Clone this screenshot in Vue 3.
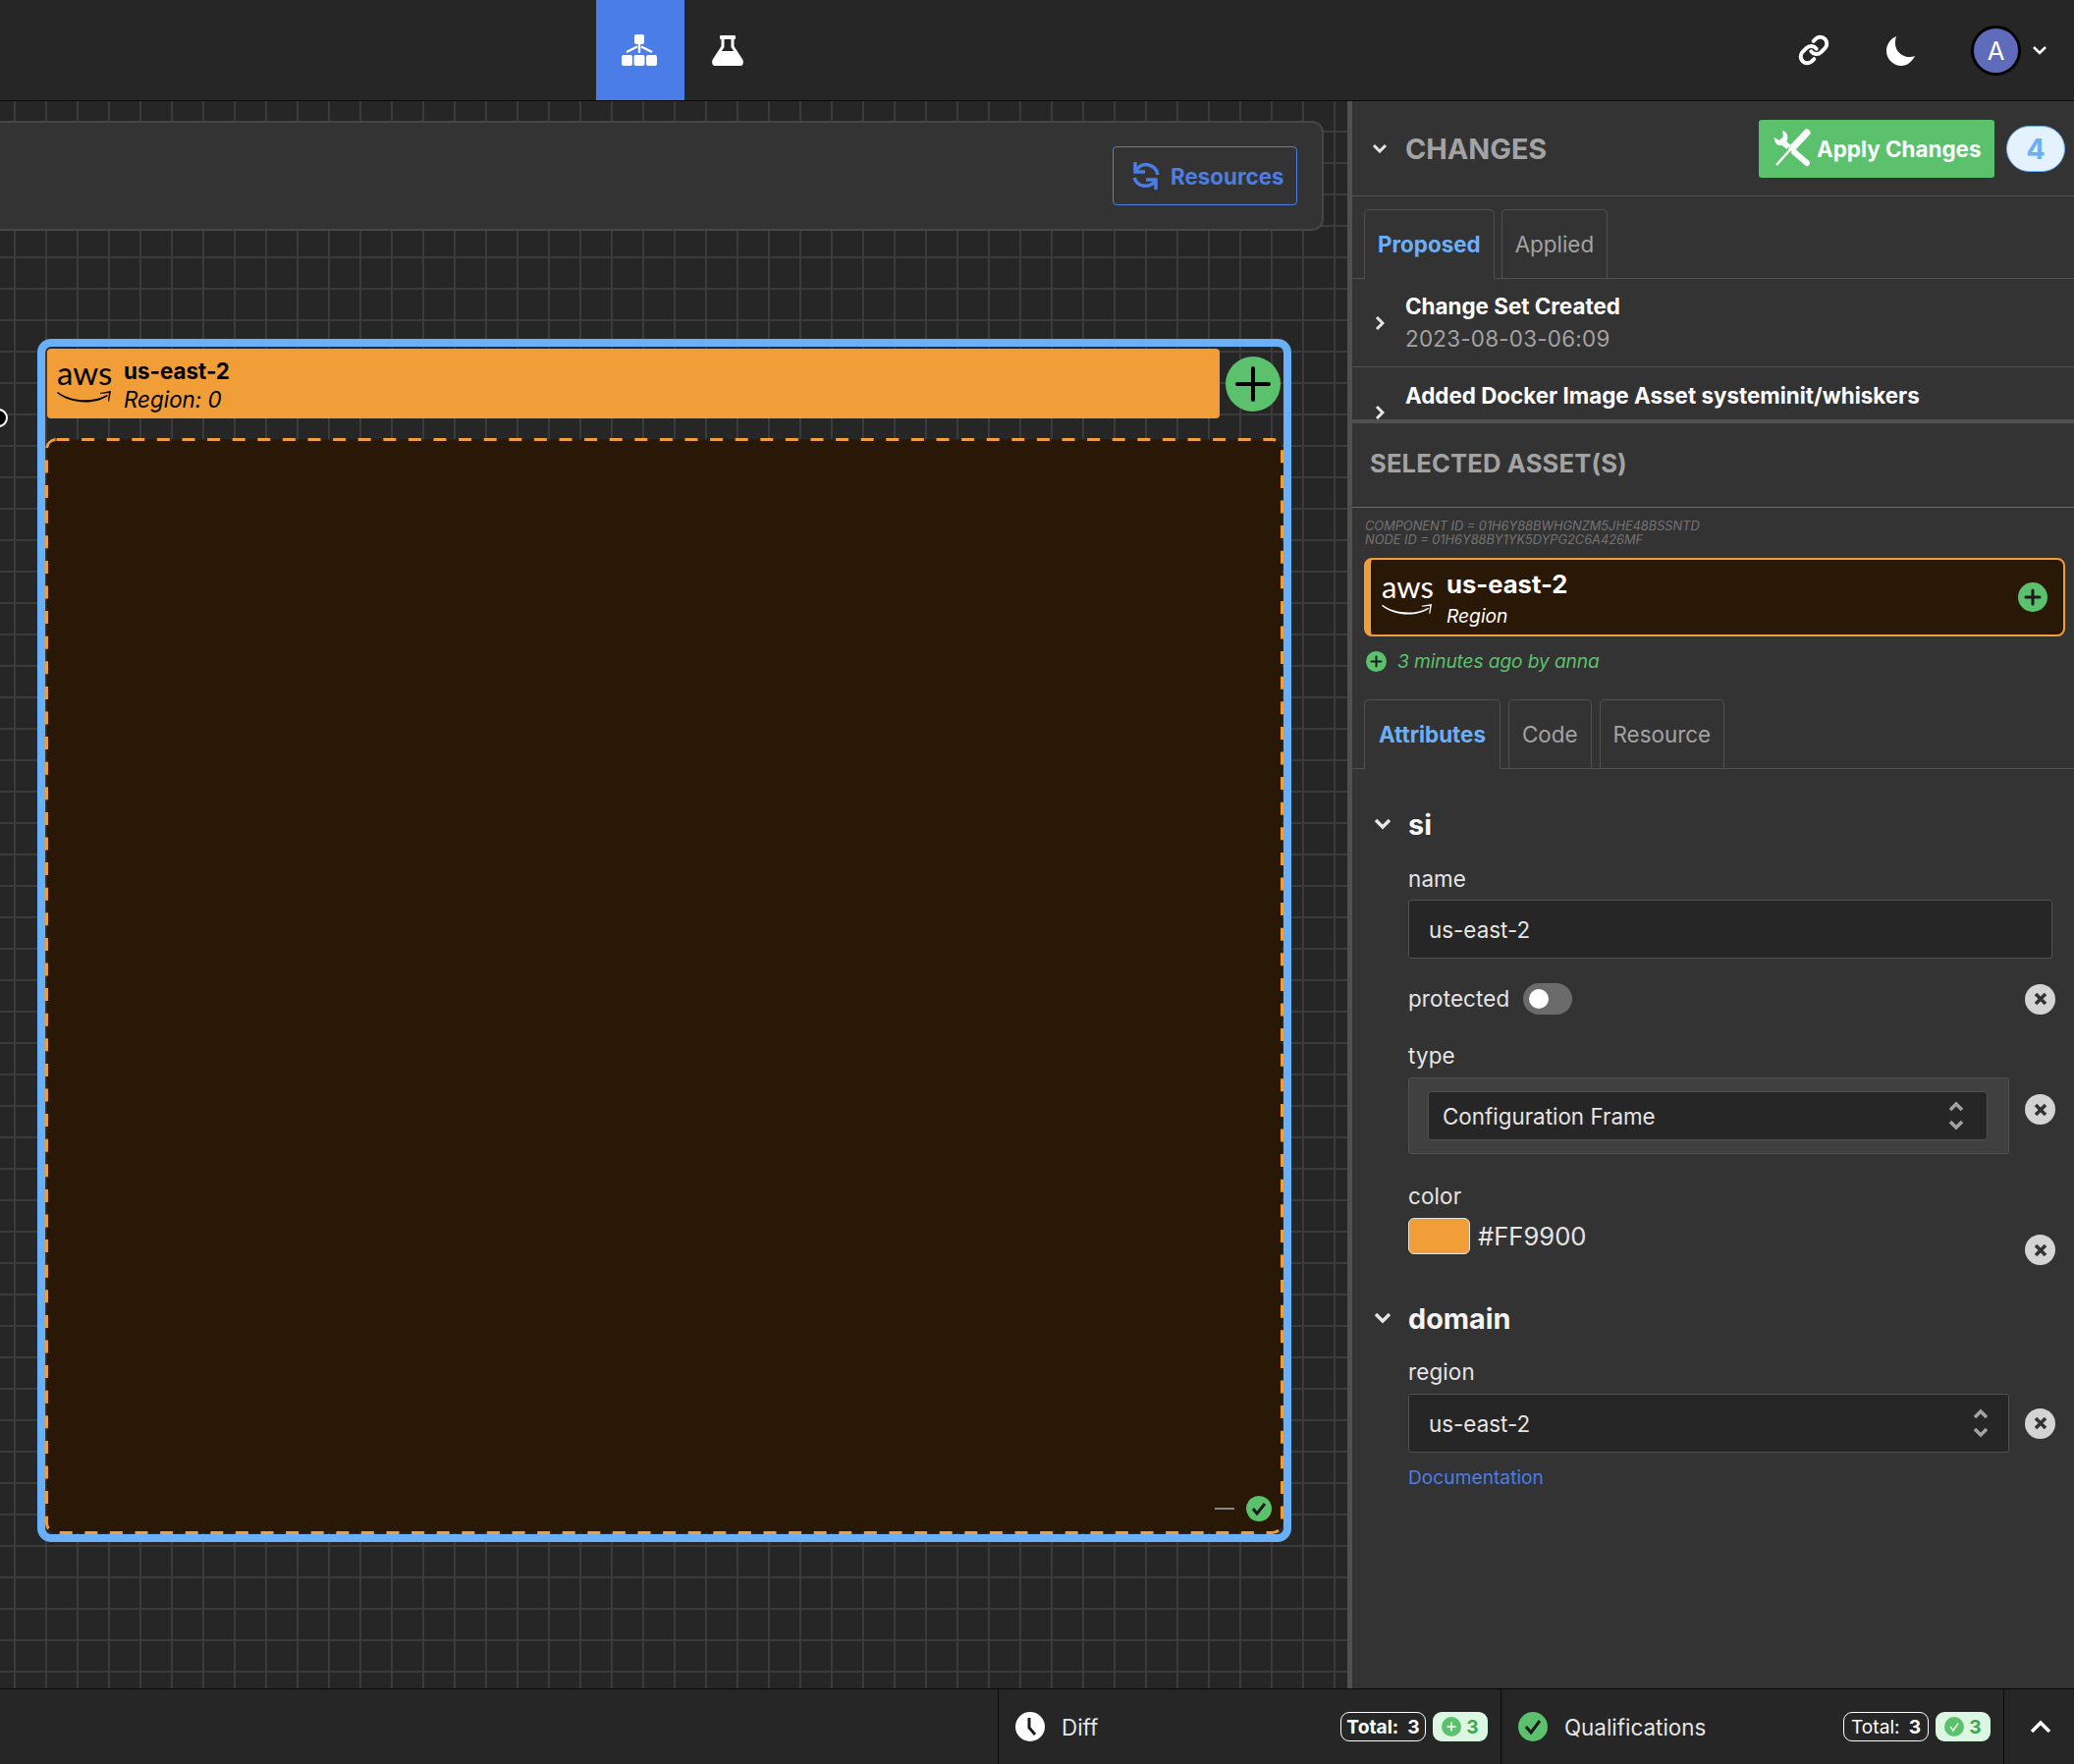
<template>
  <div class="app">
    <!-- top nav -->
    <header class="topbar">
      <nav class="nav-tabs">
        <div class="nav-tab active">
          <svg width="36" height="32" viewBox="0 0 36 32">
            <rect x="13" y="0" width="10" height="10" rx="2" fill="#fff" />
            <rect x="0" y="21" width="11" height="11" rx="2" fill="#fff" />
            <rect x="12.5" y="21" width="11" height="11" rx="2" fill="#fff" />
            <rect x="25" y="21" width="11" height="11" rx="2" fill="#fff" />
            <path d="M18 10v9M16 12.5 5 18M20 12.5 31 18" stroke="#fff" stroke-width="2.4" fill="none" />
          </svg>
        </div>
        <div class="nav-tab">
          <svg width="32" height="31" viewBox="0 0 32 31">
            <rect x="8" y="0" width="16" height="4" rx="1" fill="#fff" />
            <path d="M11 3v8.5L2 25.5Q.5 30 5 30h22q4.500 0 3-4.500L21 11.500V3" fill="none" stroke="#fff" stroke-width="3" />
            <path d="M9 16h14l8 12-3 2H4l-3-2z" fill="#fff" />
          </svg>
        </div>
      </nav>
      <div class="top-actions">
        <svg class="link-icon" width="32" height="32" viewBox="0 0 24 24" fill="none" stroke="#fff" stroke-width="3" stroke-linecap="round">
          <path d="M10 13a5 5 0 0 0 7.540.54l3-3a5 5 0 0 0-7.070-7.070l-1.720 1.710" />
          <path d="M14 11a5 5 0 0 0-7.540-.54l-3 3a5 5 0 0 0 7.070 7.070l1.710-1.710" />
        </svg>
        <svg class="moon-icon" width="30" height="30" viewBox="0 0 30 30">
          <path d="M10 0C3 3 0 9 0 15c0 8 7 15 15 15 6 0 11-4 14-10C19 24 5 16 10 0z" fill="#fff" />
        </svg>
        <div class="avatar">A</div>
        <svg class="avatar-caret" width="16" height="10" viewBox="0 0 16 10" fill="none" stroke="#fff" stroke-width="2.500">
          <path d="M2 2l6 6 6-6" />
        </svg>
      </div>
    </header>

    <main class="workspace">
      <!-- diagram canvas -->
      <section class="canvas">
        <div class="toolbar">
          <button class="resources-btn" type="button">
            <svg width="30" height="34" viewBox="10 8 30 34" fill="none" stroke="#4a7de8" stroke-width="3.500">
              <path d="M15 11v10h10M15 21a12 12 0 0 1 23 3" />
              <path d="M36 39V29H26M36 29a12 12 0 0 1-22-2" />
            </svg>
            Resources
          </button>
        </div>

        <div class="port"></div>

        <div class="frame">
          <div class="frame-top">
            <div class="frame-head">
              <div class="aws-logo">
                <span>aws</span>
                <svg width="56" height="14" viewBox="0 0 56 14">
                  <path d="M1 2c13 10 36 11 50 3l1 1C38 16 13 14 0 3zM44 3l11-2-2 11-1-1 1-8-9 1z" fill="currentColor" />
                </svg>
              </div>
              <div class="frame-title">
                <strong>us-east-2</strong>
                <em>Region: 0</em>
              </div>
            </div>
            <div class="frame-add">
              <svg width="36" height="36" viewBox="0 0 36 36">
                <path d="M18 2v32M2 18h32" stroke="#000" stroke-width="4" stroke-linecap="round" />
              </svg>
            </div>
          </div>

          <div class="frame-body">
            <svg class="frame-dash" width="1261" height="1116" viewBox="0 0 1261 1116">
              <rect x="1.500" y="1.500" width="1258" height="1113" rx="10" fill="#281805" stroke="#f19e38" stroke-width="3" stroke-dasharray="13 12.600" />
            </svg>
            <div class="frame-status">
              <span class="status-dash"></span>
              <span class="status-check">
                <svg width="16" height="14" viewBox="0 0 16 14" fill="none" stroke="#1b1b1b" stroke-width="3">
                  <path d="M2 7l4 5 8-10" />
                </svg>
              </span>
            </div>
          </div>
        </div>
      </section>

      <!-- right panel -->
      <aside class="panel">
        <div class="changes-head">
          <svg class="chev-down" width="16" height="10" viewBox="0 0 16 10" fill="none" stroke="#e5e5e5" stroke-width="3">
            <path d="M2 2l6 6 6-6" />
          </svg>
          <h2>CHANGES</h2>
          <button class="apply-btn" type="button">
            <svg width="40" height="40" viewBox="8 6 40 40">
              <path d="M18 8c5 1 7 7 4 12l-2 2c-5 3-10 0-10.500-7l5.500 3 4-4z" fill="#fff" />
              <path d="M20 21l23 20" stroke="#fff" stroke-width="6" stroke-linecap="round" />
              <path d="M12 43l16-18" stroke="#5cc16c" stroke-width="6" />
              <path d="M12 43l16-18" stroke="#fff" stroke-width="2.500" />
              <path d="M28 26 43 10" stroke="#fff" stroke-width="7" stroke-linecap="round" />
            </svg>
            Apply Changes
          </button>
          <span class="count-badge">4</span>
        </div>

        <div class="tab-strip">
          <div v-for="tab in changeTabs" :key="tab" class="tab" :class="{ active: tab === 'Proposed' }">{{ tab }}</div>
        </div>

        <div class="change-list">
          <div v-for="item in changes" :key="item.title" class="change-row">
            <svg class="chev-right" width="10" height="16" viewBox="0 0 10 16" fill="none" stroke="#e5e5e5" stroke-width="3">
              <path d="M2 2l6 6-6 6" />
            </svg>
            <div>
              <div class="change-title">{{ item.title }}</div>
              <div class="change-date">{{ item.date }}</div>
            </div>
          </div>
        </div>

        <div class="selected-head">SELECTED ASSET(S)</div>

        <div class="ids">
          COMPONENT ID = 01H6Y88BWHGNZM5JHE48BSSNTD<br />
          NODE ID = 01H6Y88BY1YK5DYPG2C6A426MF
        </div>

        <div class="asset-card">
          <div class="aws-logo small">
            <span>aws</span>
            <svg width="52" height="13" viewBox="0 0 56 14">
              <path d="M1 2c13 10 36 11 50 3l1 1C38 16 13 14 0 3zM44 3l11-2-2 11-1-1 1-8-9 1z" fill="currentColor" />
            </svg>
          </div>
          <div class="asset-title">
            <strong>us-east-2</strong>
            <em>Region</em>
          </div>
          <span class="asset-add">
            <svg width="18" height="18" viewBox="0 0 18 18">
              <path d="M9 2v14M2 9h14" stroke="#1b1b1b" stroke-width="3" stroke-linecap="round" />
            </svg>
          </span>
        </div>

        <div class="asset-time">
          <span class="time-dot">
            <svg width="13" height="13" viewBox="0 0 13 13">
              <path d="M6.500 1.500v10M1.500 6.500h10" stroke="#1b1b1b" stroke-width="2" stroke-linecap="round" />
            </svg>
          </span>
          3 minutes ago by anna
        </div>

        <div class="tab-strip attr-tabs">
          <div v-for="tab in assetTabs" :key="tab" class="tab" :class="{ active: tab === 'Attributes' }">{{ tab }}</div>
        </div>

        <div class="attrs">
          <div class="group-head first">
            <svg width="18" height="12" viewBox="0 0 18 12" fill="none" stroke="#e5e5e5" stroke-width="3.500">
              <path d="M2 2l7 7 7-7" />
            </svg>
            <span>si</span>
          </div>

          <div class="field-label name-label">name</div>
          <div class="text-input">us-east-2</div>

          <div class="attr-row protected-row">
            <div class="protected">
              <span class="field-label">protected</span>
              <span class="toggle"><i></i></span>
            </div>
            <span class="clear-btn">
              <svg width="16" height="16" viewBox="0 0 16 16"><path d="M3 3l10 10M13 3L3 13" stroke="#333" stroke-width="3.500" /></svg>
            </span>
          </div>

          <div class="field-label type-label">type</div>
          <div class="attr-row type-row">
            <div class="select-wrap">
              <div class="select-box">
                Configuration Frame
                <svg width="16" height="30" viewBox="0 0 16 30" fill="none" stroke="#a3a3a3" stroke-width="3.500">
                  <path d="M2 9l6-6 6 6M2 21l6 6 6-6" />
                </svg>
              </div>
            </div>
            <span class="clear-btn">
              <svg width="16" height="16" viewBox="0 0 16 16"><path d="M3 3l10 10M13 3L3 13" stroke="#333" stroke-width="3.500" /></svg>
            </span>
          </div>

          <div class="field-label color-label">color</div>
          <div class="attr-row color-row">
            <div class="color-value">
              <span class="swatch"></span>
              #FF9900
            </div>
            <span class="clear-btn">
              <svg width="16" height="16" viewBox="0 0 16 16"><path d="M3 3l10 10M13 3L3 13" stroke="#333" stroke-width="3.500" /></svg>
            </span>
          </div>

          <div class="group-head second">
            <svg width="18" height="12" viewBox="0 0 18 12" fill="none" stroke="#e5e5e5" stroke-width="3.500">
              <path d="M2 2l7 7 7-7" />
            </svg>
            <span>domain</span>
          </div>

          <div class="field-label region-label">region</div>
          <div class="attr-row region-row">
            <div class="select-box plain">
              us-east-2
              <svg width="16" height="30" viewBox="0 0 16 30" fill="none" stroke="#a3a3a3" stroke-width="3.500">
                <path d="M2 9l6-6 6 6M2 21l6 6 6-6" />
              </svg>
            </div>
            <span class="clear-btn">
              <svg width="16" height="16" viewBox="0 0 16 16"><path d="M3 3l10 10M13 3L3 13" stroke="#333" stroke-width="3.500" /></svg>
            </span>
          </div>
          <a class="doc-link">Documentation</a>
        </div>
      </aside>
    </main>

    <!-- status bar -->
    <footer class="statusbar">
      <div class="status-cell">
        <span class="cell-icon clock">
          <svg width="30" height="30" viewBox="0 0 30 30">
            <circle cx="15" cy="15" r="15" fill="#fff" />
            <path d="M14 6v10l6 7" fill="none" stroke="#1b1b1b" stroke-width="3" />
          </svg>
        </span>
        <span class="cell-label">Diff</span>
        <span class="pill total bold">Total:<b>3</b></span>
        <span class="pill ok">
          <span class="mini-dot">
            <svg width="12" height="12" viewBox="0 0 12 12"><path d="M6 1.500v9M1.500 6h9" stroke="#dcf7e1" stroke-width="2" /></svg>
          </span>
          3
        </span>
      </div>
      <div class="status-cell">
        <span class="cell-icon check">
          <svg width="18" height="16" viewBox="0 0 18 16" fill="none" stroke="#1b1b1b" stroke-width="3">
            <path d="M2 8l5 6 9-12" />
          </svg>
        </span>
        <span class="cell-label">Qualifications</span>
        <span class="pill total">Total:<b>3</b></span>
        <span class="pill ok">
          <span class="mini-dot">
            <svg width="12" height="12" viewBox="0 0 12 12" fill="none"><path d="M2 6l3 4 5-7.500" stroke="#dcf7e1" stroke-width="1.600" /></svg>
          </span>
          3
        </span>
      </div>
      <div class="caret-cell">
        <svg width="22" height="14" viewBox="0 0 22 14" fill="none" stroke="#fff" stroke-width="3.500">
          <path d="M2 12l9-9 9 9" />
        </svg>
      </div>
    </footer>
  </div>
</template>

<script setup>
const changeTabs = ["Proposed", "Applied"];
const assetTabs = ["Attributes", "Code", "Resource"];

const changes = [
  { title: "Change Set Created", date: "2023-08-03-06:09" },
  { title: "Added Docker Image Asset systeminit/whiskers", date: "2023-08-03-06:10" },
];
</script>

<style>
html,
body {
  margin: 0;
  background: #262626;
}
</style>

<style scoped>
.app {
  display: flex;
  flex-direction: column;
  width: 2112px;
  height: 1796px;
  overflow: hidden;
  font-family: Inter, "Liberation Sans", sans-serif;
  font-size: 22.4px;
  color: #e5e5e5;
  background: #262626;
}

/* top nav */
.topbar {
  display: flex;
  justify-content: space-between;
  flex: none;
  height: 102px;
  padding-left: 607px;
  box-sizing: content-box;
  background: #262626;
  border-bottom: 1px solid #0a0a0a;
}

.nav-tabs {
  display: flex;
}

.nav-tab {
  display: flex;
  align-items: center;
  justify-content: center;
  box-sizing: border-box;
  width: 90px;
  height: 102px;
  padding-right: 2px;
}

.nav-tab.active {
  background: #4a7de8;
}

.top-actions {
  display: flex;
  align-items: center;
  padding-right: 27px;
}

.moon-icon {
  margin-left: 58px;
  margin-top: 2px;
}

.avatar {
  display: flex;
  align-items: center;
  justify-content: center;
  width: 45px;
  height: 45px;
  margin-left: 56px;
  border: 3px solid #000;
  border-radius: 50%;
  background: #5f6bbb;
  color: #fff;
  font-size: 25.6px;
}

.avatar-caret {
  margin-left: 11px;
}

/* canvas */
.workspace {
  display: flex;
  flex: 1;
  min-height: 0;
}

.canvas {
  position: relative;
  flex: none;
  width: 1372px;
  background-color: #262626;
  background-image: linear-gradient(to right, #3b3b3b 2px, transparent 2px),
    linear-gradient(to bottom, #3b3b3b 2px, transparent 2px);
  background-size: 32px 32px;
  background-position: 14px 30px;
}

.toolbar {
  display: flex;
  align-items: center;
  justify-content: flex-end;
  box-sizing: border-box;
  width: 1348px;
  height: 112px;
  margin-top: 20px;
  padding-right: 25px;
  background: #333;
  border: 2px solid #464646;
  border-left: none;
  border-radius: 0 12px 12px 0;
}

.resources-btn {
  display: flex;
  align-items: center;
  gap: 11px;
  box-sizing: border-box;
  width: 188px;
  height: 60px;
  padding: 0 0 0 17px;
  background: none;
  border: 1px solid #4a7de8;
  border-radius: 4px;
  color: #4a7de8;
  font: 700 22.4px Inter, sans-serif;
}

.port {
  position: absolute;
  left: -11px;
  top: 313px;
  width: 15px;
  height: 15px;
  border: 2px solid #fff;
  border-radius: 50%;
  background: #000;
}

.frame {
  position: absolute;
  left: 38px;
  top: 242px;
  display: flex;
  flex-direction: column;
  box-sizing: border-box;
  width: 1277px;
  height: 1225px;
  border: 8px solid #69b0f8;
  border-radius: 14px;
}

.frame-top {
  display: flex;
  align-items: center;
  margin: 2px 0 20px 2px;
}

.frame-head {
  display: flex;
  align-items: center;
  box-sizing: border-box;
  width: 1194px;
  height: 71px;
  padding-left: 10px;
  background: #f19e38;
  border-radius: 4px;
  color: #000;
}

.aws-logo {
  display: flex;
  flex-direction: column;
  width: 56px;
  font-family: Lato, sans-serif;
  font-size: 33px;
  line-height: 24px;
  text-align: center;
}

.aws-logo span {
  margin-top: -3px;
}

.aws-logo svg {
  margin-top: 6px;
}

.frame-title {
  display: flex;
  flex-direction: column;
  margin-left: 12px;
  padding-top: 2px;
  line-height: 29px;
}

.frame-title strong {
  font-weight: 700;
}

.frame-add {
  display: flex;
  align-items: center;
  justify-content: center;
  width: 56px;
  height: 56px;
  margin-left: 6px;
  border-radius: 50%;
  background: #5cc16c;
}

.frame-body {
  position: relative;
  display: flex;
  align-items: flex-end;
  justify-content: flex-end;
  flex: 1;
}

.frame-dash {
  position: absolute;
  left: 0;
  top: 0;
}

.frame-status {
  position: relative;
  display: flex;
  align-items: center;
  gap: 12px;
  padding: 0 12px 13px 0;
}

.status-dash {
  width: 20px;
  height: 2px;
  background: #888;
}

.status-check {
  display: flex;
  align-items: center;
  justify-content: center;
  width: 26px;
  height: 26px;
  border-radius: 50%;
  background: #5cc16c;
}

/* right panel */
.panel {
  flex: none;
  box-sizing: border-box;
  width: 740px;
  background: #333;
  border-left: 5px solid #505050;
}

.changes-head {
  display: flex;
  align-items: center;
  box-sizing: border-box;
  height: 97px;
  padding: 0 9px 0 20px;
  border-bottom: 1px solid #505050;
}

.changes-head h2 {
  flex: 1;
  margin: 0 0 0 18px;
  font-size: 28.8px;
  font-weight: 700;
  color: #a3a3a3;
}

.apply-btn {
  display: flex;
  align-items: center;
  gap: 5px;
  box-sizing: border-box;
  width: 240px;
  height: 59px;
  padding: 0 0 0 14px;
  border: none;
  border-radius: 3px;
  background: #5cc16c;
  color: #fff;
  font: 700 22.4px Inter, sans-serif;
}

.count-badge {
  display: flex;
  align-items: center;
  justify-content: center;
  box-sizing: border-box;
  width: 60px;
  height: 47px;
  margin-left: 12px;
  border: 1px solid #69b0f8;
  border-radius: 24px;
  background: #e3f2fd;
  color: #69b0f8;
  font-size: 28.8px;
  font-weight: 700;
}

.tab-strip {
  display: flex;
  gap: 7px;
  box-sizing: border-box;
  height: 84px;
  padding: 13px 0 0 12px;
  border-bottom: 1px solid #505050;
}

.tab {
  display: flex;
  align-items: center;
  height: 70px;
  box-sizing: border-box;
  padding: 0 13px;
  border: 1px solid #505050;
  border-bottom: none;
  border-radius: 5px 5px 0 0;
  color: #a3a3a3;
}

.tab.active {
  height: 71px;
  padding-bottom: 1px;
  background: #333;
  color: #69b0f8;
  font-weight: 700;
}

.change-list {
  height: 143px;
  overflow: hidden;
  border-bottom: 4px solid #505050;
}

.change-row {
  display: flex;
  align-items: center;
  box-sizing: border-box;
  height: 90px;
  padding-left: 23px;
  border-bottom: 1px solid #505050;
  line-height: 32px;
}

.change-row + .change-row {
  padding-top: 2px;
}

.change-title {
  margin-left: 21px;
  color: #fff;
  font-weight: 700;
}

.change-date {
  margin: 1px 0 0 21px;
  color: #a3a3a3;
  letter-spacing: 0.25px;
}

.selected-head {
  box-sizing: border-box;
  height: 86px;
  padding: 26px 0 0 18px;
  border-bottom: 1px solid #6b6b6b;
  color: #a3a3a3;
  font-size: 25.6px;
  font-weight: 700;
  letter-spacing: 0.15px;
  line-height: 30px;
}

.ids {
  height: 27px;
  padding: 12px 0 12px 13px;
  color: #737373;
  font-size: 12.8px;
  font-style: italic;
  line-height: 13.500px;
}

.asset-card {
  display: flex;
  align-items: center;
  box-sizing: border-box;
  width: 714px;
  height: 80px;
  margin-left: 12px;
  padding: 0 16px 0 11px;
  background: #281805;
  border: 2px solid #f19e38;
  border-left-width: 7px;
  border-radius: 8px;
  color: #fff;
}

.aws-logo.small {
  width: 52px;
  font-size: 31px;
  line-height: 22px;
}

.asset-title {
  display: flex;
  flex: 1;
  flex-direction: column;
  margin-left: 14px;
  padding-top: 5px;
  line-height: 32px;
}

.asset-title strong {
  font-size: 25.6px;
  font-weight: 700;
}

.asset-title em {
  font-size: 19.2px;
}

.asset-add {
  display: flex;
  align-items: center;
  justify-content: center;
  width: 30px;
  height: 30px;
  border-radius: 50%;
  background: #5cc16c;
}

.asset-time {
  display: flex;
  align-items: center;
  gap: 11px;
  height: 26px;
  margin: 12px 0 0 14px;
  color: #5cc16c;
  font-size: 19.2px;
  font-style: italic;
  letter-spacing: -0.13px;
}

.time-dot {
  display: flex;
  align-items: center;
  justify-content: center;
  width: 21px;
  height: 21px;
  border-radius: 50%;
  background: #5cc16c;
}

.attr-tabs {
  gap: 8px;
  margin-top: 13px;
}

.attr-tabs .tab.active {
  padding: 0 14px 1px;
}

.attrs {
  padding-left: 57px;
}

.group-head {
  position: relative;
  display: flex;
  align-items: center;
  height: 40px;
  font-size: 28.8px;
  font-weight: 700;
  color: #f5f5f5;
}

.group-head svg {
  position: absolute;
  left: -35px;
  top: 14px;
}

.group-head.first {
  margin-top: 36px;
}

.group-head.second {
  margin-top: 45px;
}

.field-label {
  display: block;
  height: 30px;
  line-height: 30px;
  color: #e5e5e5;
  letter-spacing: 0.15px;
}

.name-label {
  margin-top: 21px;
}

.text-input {
  display: flex;
  align-items: center;
  box-sizing: border-box;
  width: 656px;
  height: 60px;
  margin-top: 6px;
  padding-left: 20px;
  background: #262626;
  border: 1px solid #505050;
  border-radius: 3px;
}

.attr-row {
  display: flex;
  justify-content: space-between;
  width: 659px;
}

.protected-row {
  align-items: center;
  height: 32px;
  margin-top: 25px;
}

.protected {
  display: flex;
  align-items: center;
  gap: 14px;
}

.toggle {
  display: flex;
  align-items: center;
  box-sizing: border-box;
  width: 50px;
  height: 32px;
  padding-left: 6px;
  border-radius: 16px;
  background: #6b6b6b;
}

.toggle i {
  width: 20px;
  height: 20px;
  border-radius: 50%;
  background: #fff;
}

.clear-btn {
  display: flex;
  align-items: center;
  justify-content: center;
  flex: none;
  width: 31px;
  height: 31px;
  border-radius: 50%;
  background: #d4d4d4;
}

.type-label {
  margin-top: 27px;
}

.type-row {
  align-items: flex-start;
  margin-top: 7px;
}

.type-row .clear-btn {
  margin-top: 17px;
}

.select-wrap {
  box-sizing: border-box;
  width: 612px;
  height: 78px;
  padding: 13px 19px;
  background: #404040;
  border: 1px solid #505050;
  border-radius: 3px;
}

.select-box {
  display: flex;
  align-items: center;
  justify-content: space-between;
  box-sizing: border-box;
  width: 570px;
  height: 50px;
  padding: 0 23px 0 14px;
  background: #262626;
  border: 1px solid #505050;
  border-radius: 3px;
}

.select-box.plain {
  width: 612px;
  height: 60px;
  padding: 0 20px 0 20px;
}

.color-label {
  margin-top: 28px;
}

.color-row {
  align-items: flex-start;
  height: 37px;
  margin-top: 7px;
}

.color-row .clear-btn {
  margin-top: 17px;
}

.color-value {
  display: flex;
  align-items: center;
  gap: 8px;
  font-size: 25.6px;
}

.swatch {
  width: 63px;
  height: 37px;
  box-sizing: border-box;
  border: 1px solid #e5e5e5;
  border-radius: 6px;
  background: #f19e38;
}

.region-label {
  margin-top: 20px;
}

.region-row {
  align-items: center;
  margin-top: 7px;
}

.doc-link {
  display: block;
  margin-top: 13px;
  color: #4a7de8;
  font-size: 19.2px;
  line-height: 24px;
}

/* status bar */
.statusbar {
  display: flex;
  justify-content: flex-end;
  flex: none;
  height: 76px;
  background: #262626;
  border-top: 1px solid #0a0a0a;
}

.status-cell {
  display: flex;
  align-items: center;
  box-sizing: border-box;
  width: 512px;
  padding: 0 13px 0 17px;
  border-left: 1px solid #0a0a0a;
}

.cell-icon {
  display: flex;
  align-items: center;
  justify-content: center;
  flex: none;
  width: 30px;
  height: 30px;
  border-radius: 50%;
}

.cell-icon.check {
  background: #5cc16c;
}

.cell-label {
  flex: 1;
  margin-left: 17px;
}

.pill {
  display: flex;
  align-items: center;
  justify-content: center;
  box-sizing: border-box;
  height: 30px;
  border-radius: 9px;
  font-size: 19.2px;
}

.pill.total {
  width: 87px;
  border: 1px solid #fff;
  color: #fff;
}

.pill.total.bold {
  font-weight: 700;
}

.pill.total b {
  margin-left: 9px;
  font-weight: 700;
}

.pill.ok {
  gap: 5px;
  width: 56px;
  margin-left: 7px;
  background: #dcf7e1;
  color: #3ea650;
  font-weight: 700;
}

.mini-dot {
  display: flex;
  align-items: center;
  justify-content: center;
  width: 20px;
  height: 20px;
  border-radius: 50%;
  background: #5cc16c;
}

.caret-cell {
  display: flex;
  align-items: center;
  justify-content: center;
  box-sizing: border-box;
  width: 72px;
  padding-left: 3px;
  border-left: 1px solid #0a0a0a;
}
</style>
